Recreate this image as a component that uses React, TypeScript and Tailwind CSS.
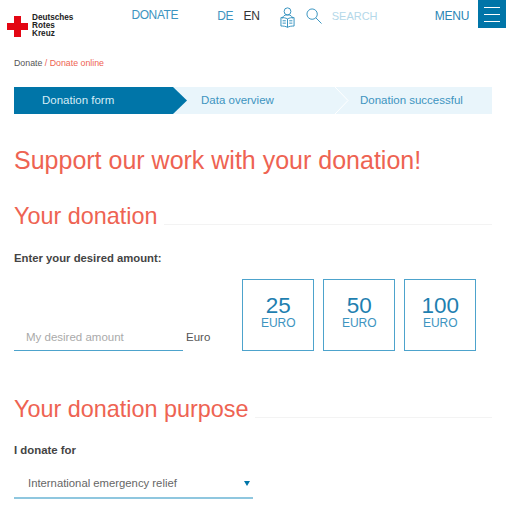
import React from 'react'

const Logo: React.FC = () => (
  <div className="flex items-center gap-[4px]">
    <svg width="21" height="21" viewBox="0 0 21 21" className="shrink-0">
      <path d="M7 0h7v7h7v7h-7v7H7v-7H0V7h7z" fill="#e30613" />
    </svg>
    <div className="text-[8.200px] leading-[8px] font-bold text-[#222]">
      <div>Deutsches</div>
      <div>Rotes</div>
      <div>Kreuz</div>
    </div>
  </div>
)

const ReaderIcon: React.FC = () => (
  <svg width="15" height="21" viewBox="0 0 16 22" fill="none" stroke="#2f8fbd" strokeWidth="1">
    <ellipse cx="8" cy="4.500" rx="3.600" ry="3.800" />
    <path d="M2.500 12c.4-2.600 2.400-3.800 5.500-3.800s5.100 1.200 5.500 3.800" />
    <path d="M8 12.500c-1.800-1.100-4.300-1.500-7-1.400v9c2.700-.1 5.200.3 7 1.400 1.800-1.100 4.300-1.500 7-1.400v-9c-2.700-.1-5.200.3-7 1.400zM8 12.500v9" />
    <path d="M2.800 14.500h3.400M2.800 17h3.400M9.800 14.500h3.400M9.800 17h3.400" />
  </svg>
)

const SearchIcon: React.FC = () => (
  <svg width="16" height="16" viewBox="0 0 17 17" fill="none" stroke="#2f8fbd" strokeWidth="1">
    <circle cx="6.500" cy="6.500" r="5.500" />
    <path d="M10.500 10.500l6 6" />
  </svg>
)

const Header: React.FC = () => (
  <header className="flex items-start h-[28px]">
    <div className="ml-[7px] mt-[14px]">
      <Logo />
    </div>
    <span className="ml-[58px] mt-[7px] text-[12px] tracking-[-0.4px] leading-[17px] text-[#3d94c0]">DONATE</span>
    <span className="ml-[39px] mt-[8px] text-[12px] tracking-[-0.2px] leading-[17px] text-[#3d94c0]">DE</span>
    <span className="ml-[10px] mt-[8px] text-[12px] tracking-[-0.2px] leading-[17px] text-[#333]">EN</span>
    <div className="ml-[20px] mt-[7px]">
      <ReaderIcon />
    </div>
    <div className="ml-[11px] mt-[8px]">
      <SearchIcon />
    </div>
    <span className="ml-[10px] mt-[8px] text-[11px] leading-[17px] text-[#b4d8e9]">SEARCH</span>
    <span className="ml-auto mr-[9px] mt-[8px] text-[12px] tracking-[-0.3px] leading-[17px] text-[#2a86b5]">MENU</span>
    <button className="w-[28px] h-[28px] bg-[#0075a8] flex flex-col items-center justify-center gap-[6px]">
      <span className="block w-[16px] h-px bg-white" />
      <span className="block w-[16px] h-px bg-white" />
      <span className="block w-[16px] h-px bg-white" />
    </button>
  </header>
)

const Steps: React.FC = () => (
  <div className="mt-[18px] mx-[14px] h-[27px] flex text-[11.500px] bg-[#e9f5fb] text-[#3d94c0]">
    <div className="relative w-[159px] bg-[#0075a8] text-[#d6ecf6] pl-[28px] flex items-center">
      Donation form
      <svg width="14" height="27" viewBox="0 0 14 27" className="absolute left-full top-0">
        <path d="M0 0l14 13.500L0 27z" fill="#0075a8" />
      </svg>
    </div>
    <div className="relative w-[162px] pl-[28px] flex items-center">
      Data overview
      <svg width="14" height="27" viewBox="0 0 14 27" fill="none" className="absolute left-full top-0">
        <path d="M0 0l13 13.500L0 27" stroke="#fff" />
      </svg>
    </div>
    <div className="pl-[25px] flex items-center">Donation successful</div>
  </div>
)

const SectionTitle: React.FC<{ title: string; className: string }> = ({ title, className }) => (
  <div className={`mx-[14px] flex items-end ${className}`}>
    <h2 className="text-[23.400px] leading-[28px] text-[#ee6352] shrink-0">{title}</h2>
    <div className="flex-1 ml-[6px] mb-[5px] h-px bg-[#f3f3f3]" />
  </div>
)

const AmountButton: React.FC<{ amount: string }> = ({ amount }) => (
  <button className="w-[72px] h-[72px] border border-[#4da3cc] flex flex-col items-center justify-center pb-[4px]">
    <span className="text-[22.500px] leading-[20px] text-[#1f7fb0]">{amount}</span>
    <span className="text-[12px] leading-[14px] text-[#3d94c0]">EURO</span>
  </button>
)

export default function App() {
  return (
    <div className="w-[506px] h-[520px] overflow-hidden bg-white font-['Liberation_Sans',sans-serif]">
      <Header />
      <div className="mt-[29px] ml-[14px] text-[8.800px] leading-[12px] text-[#555]">
        Donate <span className="text-[#ee6352]">/ Donate online</span>
      </div>
      <Steps />
      <h1 className="mt-[30px] mx-[14px] text-[25px] leading-[32px] text-[#ee6352]">
        Support our work with your donation!
      </h1>
      <SectionTitle title="Your donation" className="mt-[26px]" />
      <p className="mt-[20px] mx-[14px] text-[11.300px] leading-[16px] font-bold text-[#444]">
        Enter your desired amount:
      </p>
      <div className="mt-[13px] mx-[14px] flex items-end">
        <div className="w-[169px] border-b border-[#4da3cc] pl-[12px] pb-[5px] text-[11.500px] leading-[16px] text-[#aaa]">
          My desired amount
        </div>
        <span className="ml-[3px] pb-[6px] text-[11.500px] leading-[16px] text-[#555]">Euro</span>
        <div className="ml-[32px] flex gap-[9px]">
          <AmountButton amount="25" />
          <AmountButton amount="50" />
          <AmountButton amount="100" />
        </div>
      </div>
      <SectionTitle title="Your donation purpose" className="mt-[44px]" />
      <p className="mt-[19px] mx-[14px] text-[11.400px] leading-[16px] font-bold text-[#444]">I donate for</p>
      <div className="mt-[11px] ml-[14px] w-[239px] h-[30px] border-b-2 border-[#8fc7df] pl-[14px] pr-[3px] flex items-center justify-between text-[11.300px] text-[#666]">
        International emergency relief
        <svg width="6" height="5" viewBox="0 0 6 5">
          <path d="M0 0h6L3 5z" fill="#0075a8" />
        </svg>
      </div>
    </div>
  )
}
